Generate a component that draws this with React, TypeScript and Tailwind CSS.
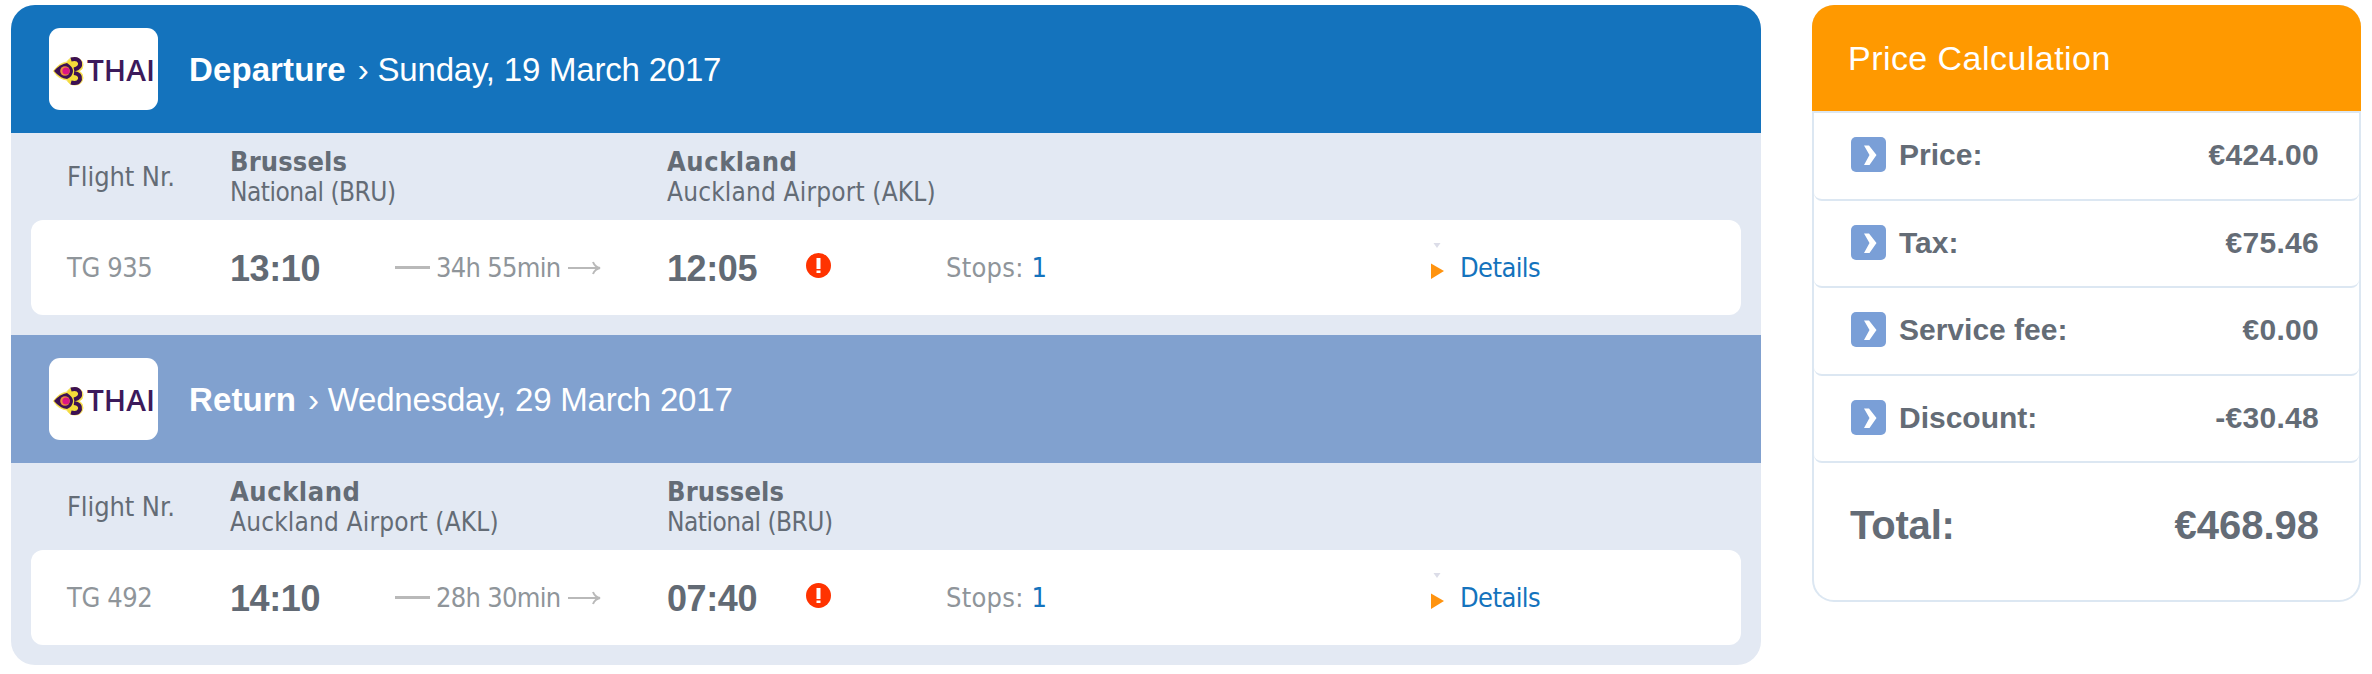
import { clsx } from "clsx"

type Stop = {
  city: string
  airport: string
  time: string
}

type Flight = {
  label: string
  date: string
  number: string
  from: Stop
  to: Stop
  duration: string
  stops: number
  tone: string
}

const brussels = { city: "Brussels", airport: "National (BRU)" }
const auckland = { city: "Auckland", airport: "Auckland Airport (AKL)" }

const flights: Flight[] = [
  {
    label: "Departure",
    date: "Sunday, 19 March 2017",
    number: "TG 935",
    from: { ...brussels, time: "13:10" },
    to: { ...auckland, time: "12:05" },
    duration: "34h 55min",
    stops: 1,
    tone: "bg-[#1473bd]",
  },
  {
    label: "Return",
    date: "Wednesday, 29 March 2017",
    number: "TG 492",
    from: { ...auckland, time: "14:10" },
    to: { ...brussels, time: "07:40" },
    duration: "28h 30min",
    stops: 1,
    tone: "bg-[#81a1cf]",
  },
]

const priceLines = [
  { label: "Price:", amount: "€424.00" },
  { label: "Tax:", amount: "€75.46" },
  { label: "Service fee:", amount: "€0.00" },
  { label: "Discount:", amount: "-€30.48" },
]

function AirlineLogo() {
  return (
    <div className="h-[82px] w-[109px] shrink-0 rounded-[11px] bg-white">
      <svg viewBox="0 0 109 82" className="h-[82px] w-[109px]" aria-label="THAI">
        <path
          d="M4.500 43 Q10 35 18 34 Q20 29.500 26 29.500 Q34 31 34 37 Q34 42 30 43 Q34 45 34 50 Q33 57 26 57 Q20 57 18 52 Q9 51 4.500 43Z"
          fill="#f5dc3a"
          stroke="#f5e060"
          strokeWidth="1"
        />
        <path d="M5 43 Q11 36 18 35 Q24 39 24 43 Q24 48 18 51 Q11 50 5 43Z" fill="#3c1053" />
        <path
          d="M22 31.500 Q29 29.500 31 34.500 Q32 40 25 41.500"
          fill="none"
          stroke="#3c1053"
          strokeWidth="4"
        />
        <path
          d="M25 45 Q32 46 31 51.500 Q29 56.500 22 54.500"
          fill="none"
          stroke="#3c1053"
          strokeWidth="4"
        />
        <circle cx="16" cy="43" r="4.800" fill="#ee8a3a" />
        <circle cx="17" cy="43" r="3.600" fill="#dc1483" />
        <text
          x="38"
          y="53"
          textLength="68"
          lengthAdjust="spacingAndGlyphs"
          className="font-['Open_Sans',sans-serif] text-[28px] font-semibold"
          fill="#3c1a5b"
        >
          THAI
        </text>
      </svg>
    </div>
  )
}

function AlertIcon() {
  return (
    <svg viewBox="0 0 25 25" className="-mt-[4px] h-[25px] w-[25px]" aria-hidden>
      <circle cx="12.500" cy="12.500" r="12.500" fill="#ff3300" />
      <rect x="10.500" y="5" width="4" height="11" fill="#fff" />
      <rect x="10.500" y="17.500" width="4" height="2.500" fill="#fff" />
    </svg>
  )
}

function DetailsIcon() {
  return (
    <svg viewBox="0 0 14 50" className="h-[50px] w-[14px]" aria-hidden>
      <path d="M2.500 0 H9.500 L6 5Z" fill="#dcdde8" />
      <path d="M0 20.500 L13 28 L0 36Z" fill="#ff930f" />
    </svg>
  )
}

function Chevron() {
  return (
    <svg viewBox="0 0 35 35" className="h-[35px] w-[35px]" aria-hidden>
      <rect width="35" height="35" rx="5" fill="#7a9fd7" />
      <path d="M13 8.500 H18 L25.500 18 L18.500 28 H13 L18.500 18Z" fill="#fff" />
    </svg>
  )
}

function Place({ stop }: { stop: Stop }) {
  const isAuckland = stop.city === "Auckland"

  return (
    <div className="leading-[31px]">
      <div className={clsx("font-bold", isAuckland ? "tracking-[0.55px]" : "tracking-[0.15px]")}>
        {stop.city}
      </div>
      <div
        className={clsx("text-[26px]", isAuckland ? "tracking-[0.16px]" : "tracking-[-0.5px]")}
      >
        {stop.airport}
      </div>
    </div>
  )
}

function FlightSection({ flight }: { flight: Flight }) {
  const { label, date, number, from, to, duration, stops, tone } = flight

  return (
    <section className="h-[330px]">
      <header className={clsx("flex h-[128px] items-center pl-[38px]", tone)}>
        <AirlineLogo />
        <h2 className="ml-[31px] pt-[2px] font-['Liberation_Sans',Arial,sans-serif] text-[33px] tracking-[-0.2px] whitespace-pre text-white">
          <b className="mr-[3px] tracking-[0.1px]">{label}</b> › {date}
        </h2>
      </header>
      <div className="flex h-[87px] items-center pl-[56px] text-[27px] text-[#646c76]">
        <span className="w-[163px] pt-[2px] tracking-[-0.1px]">Flight Nr.</span>
        <div className="w-[437px]">
          <Place stop={from} />
        </div>
        <Place stop={to} />
      </div>
      <div className="mx-5 flex h-[95px] items-center rounded-[12px] bg-white pl-[36px] text-[27px] text-[#8f959a]">
        <span className="w-[163px] pt-[2px] tracking-[-0.4px]">{number}</span>
        <b className="w-[165px] pt-[2px] font-['Liberation_Sans',Arial,sans-serif] text-[36px] tracking-[-0.4px] text-[#626a74]">
          {from.time}
        </b>
        <span className="h-[3px] w-[35px] bg-[#b9b9b9]" />
        <span className="ml-[6px] w-[132px] pt-[2px] tracking-[-0.7px] whitespace-nowrap">
          {duration}
        </span>
        <svg viewBox="0 0 34 16" className="h-4 w-[34px]" aria-hidden>
          <path
            d="M0 8 H32 M25 2 Q27 7 32 8 Q27 9 25 14"
            fill="none"
            stroke="#b9b9b9"
            strokeWidth="2"
          />
        </svg>
        <b className="ml-[65px] w-[139px] pt-[2px] font-['Liberation_Sans',Arial,sans-serif] text-[36px] tracking-[-0.4px] text-[#626a74]">
          {to.time}
        </b>
        <AlertIcon />
        <span className="ml-[115px] w-[485px] pt-[2px] tracking-[0.25px]">
          Stops: <span className="text-[#1473bd]">{stops}</span>
        </span>
        <DetailsIcon />
        <span className="ml-[15px] pt-[2px] tracking-[-0.6px] text-[#1473bd]">Details</span>
      </div>
    </section>
  )
}

function PriceCalculation() {
  return (
    <aside className="ml-[51px] h-[597px] w-[549px] overflow-hidden rounded-[22px] bg-[#dce7f2] font-['Liberation_Sans',Arial,sans-serif] text-[#646c76]">
      <h2 className="flex h-[106px] items-center bg-[#ff9900] pl-[36px] text-[34px] tracking-[0.45px] text-white">
        Price Calculation
      </h2>
      <div className="mx-[2px] mt-[2px]">
        {priceLines.map((line) => (
          <div key={line.label} className="h-[87.500px] bg-white">
            <div className="flex h-full items-center rounded-b-[8px] border-b-2 border-[#dce7f2] pr-[40px] pb-[2px] pl-[37px] text-[30px] font-bold">
              <Chevron />
              <span className="ml-[13px]">{line.label}</span>
              <span className="ml-auto tracking-[0.3px]">{line.amount}</span>
            </div>
          </div>
        ))}
        <div className="flex h-[137px] items-center justify-between rounded-b-[20px] bg-white pr-[40px] pb-[14px] pl-[36px] text-[40px] font-bold">
          <span className="tracking-[-0.2px]">Total:</span>
          <span>€468.98</span>
        </div>
      </div>
    </aside>
  )
}

export default function App() {
  return (
    <main className="flex h-[674px] w-[2372px] items-start bg-white pt-[5px] pl-[11px] font-['DejaVu_Sans_Condensed','DejaVu_Sans',sans-serif]">
      <div className="h-[660px] w-[1750px] overflow-hidden rounded-[24px] bg-[#e3e9f3]">
        {flights.map((flight) => (
          <FlightSection key={flight.label} flight={flight} />
        ))}
      </div>
      <PriceCalculation />
    </main>
  )
}
